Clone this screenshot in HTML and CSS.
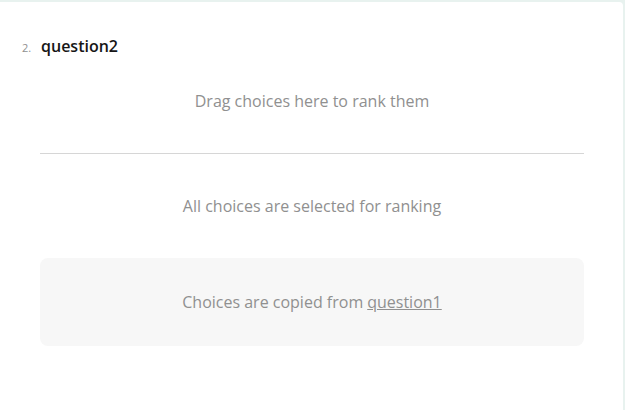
FILE: index.html
```html
<!DOCTYPE html>
<html>
<head>
<meta charset="utf-8">
<link rel="stylesheet" href="styles.css">
</head>
<body>
<div class="card">
  <div class="header">
    <span class="num">2.</span>
    <span class="title">question2</span>
  </div>
  <div class="content">
    <div class="placeholder top">Drag choices here to rank them</div>
    <div class="divider"></div>
    <div class="placeholder mid">All choices are selected for ranking</div>
    <div class="copied">Choices are copied from <a class="link">question1</a></div>
  </div>
</div>
</body>
</html>
```
FILE: styles.css
```css
html, body {
  margin: 0;
  padding: 0;
  height: 100%;
}
body {
  background: #e8f2ef;
  font-family: "Open Sans", "Liberation Sans", sans-serif;
  overflow: hidden;
}
.card {
  background: #fff;
  margin: 2px 2px 0 -4px;
  padding: 0 39px 0 44px;
  height: 420px;
  border-radius: 4px;
  box-sizing: border-box;
}
.header {
  display: flex;
  align-items: baseline;
  padding-top: 33px;
  margin-left: -18px;
}
.num {
  font-size: 11px;
  color: #909090;
  width: 19px;
}
.title {
  font-size: 16px;
  font-weight: 600;
  color: #161616;
  line-height: 22px;
}
.content {
  display: flex;
  flex-direction: column;
}
.placeholder {
  text-align: center;
  color: #909090;
  font-size: 16px;
  line-height: 24px;
}
.top {
  margin-top: 32px;
}
.divider {
  height: 1px;
  background: #d6d6d6;
  margin-top: 40px;
}
.mid {
  margin-top: 40px;
}
.copied {
  margin-top: 40px;
  background: #f7f7f7;
  border-radius: 8px;
  height: 88px;
  display: flex;
  align-items: center;
  justify-content: center;
  color: #909090;
  font-size: 16px;
}
.link {
  text-decoration: underline;
  color: #909090;
  margin-left: 4px;
}
```
